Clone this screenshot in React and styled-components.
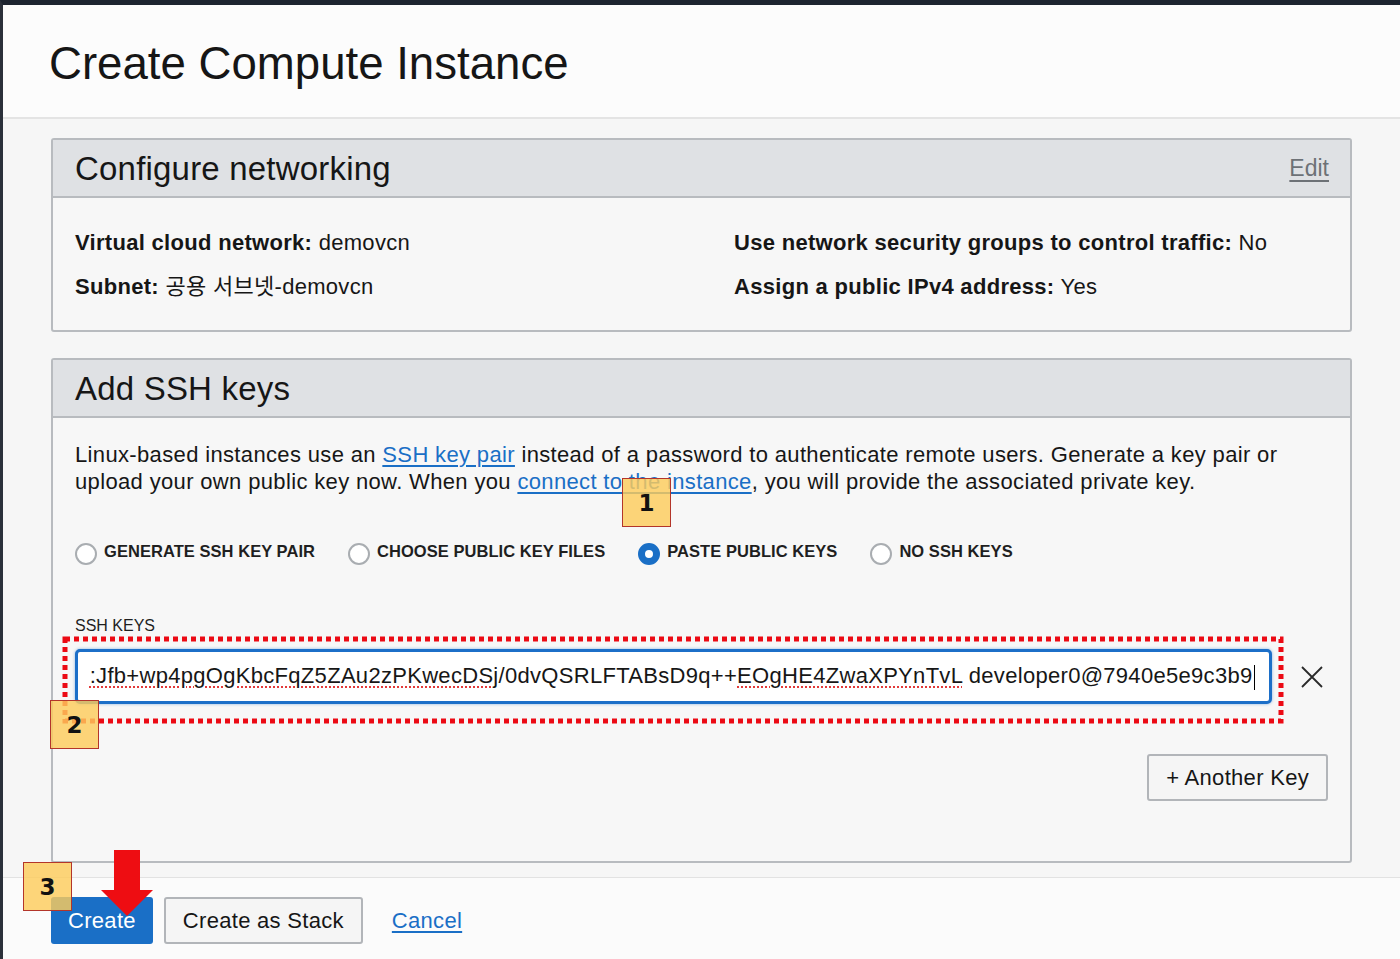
import React from 'react';
import styled, { createGlobalStyle } from 'styled-components';

const GlobalStyle = createGlobalStyle`
  html, body {
    margin: 0;
    padding: 0;
    background: #f6f6f6;
  }
  body {
    font-family: "Liberation Sans", Arial, "Noto Sans CJK KR", sans-serif;
    color: #161616;
  }
`;

const Frame = styled.div`
  position: relative;
  width: 1400px;
  height: 959px;
  box-sizing: border-box;
  border-top: 5px solid #1d2430;
  border-left: 3px solid #2b303a;
  background: #f6f6f6;
  display: flex;
  flex-direction: column;
  overflow: hidden;
`;

const Header = styled.div`
  height: 112px;
  flex: none;
  background: #fcfcfc;
  border-bottom: 2px solid #e4e4e4;
  display: flex;
  align-items: center;
  padding-left: 46px;
`;

const PageTitle = styled.h1`
  margin: 6px 0 0;
  font-size: 45.6px;
  font-weight: 400;
  color: #161616;
`;

const Content = styled.div`
  flex: 1;
  padding: 19px 48px 0 48px;
  display: flex;
  flex-direction: column;
  gap: 26px;
`;

const Panel = styled.section`
  width: 1301px;
  box-sizing: border-box;
  border: 2px solid #b8bbbf;
  border-radius: 3px;
  background: #f7f7f7;
  height: ${(p) => p.$height}px;
  display: flex;
  flex-direction: column;
`;

const PanelHead = styled.div`
  height: 58px;
  flex: none;
  box-sizing: border-box;
  background: #dfe1e4;
  border-bottom: 2px solid #b8bbbf;
  display: flex;
  align-items: center;
  justify-content: space-between;
  padding: 0 21px 0 22px;
`;

const PanelTitle = styled.h2`
  margin: 2px 0 0;
  font-size: 33px;
  font-weight: 400;
  letter-spacing: 0.2px;
  color: #161616;
`;

const EditLink = styled.a`
  font-size: 23px;
  color: #6d7176;
  text-decoration: underline;
  text-underline-offset: 4px;
`;

const NetBody = styled.div`
  display: grid;
  grid-template-columns: 659px 1fr;
  row-gap: 18px;
  padding: 32px 22px 0 22px;
`;

const Field = styled.div`
  font-size: 22px;
  line-height: 26px;
  letter-spacing: 0.3px;
  color: #161616;
  b {
    font-weight: 700;
  }
`;

const SshBody = styled.div`
  padding: 23px 22px 0 22px;
  display: flex;
  flex-direction: column;
`;

const Intro = styled.p`
  margin: 0;
  font-size: 22px;
  line-height: 27px;
  letter-spacing: 0.35px;
  color: #161616;
`;

const TextLink = styled.a`
  color: #1a6fc6;
  text-decoration: underline;
  text-underline-offset: 3px;
`;

const RadioRow = styled.div`
  display: flex;
  align-items: center;
  gap: 33px;
  margin-top: 42px;
`;

const RadioOption = styled.label`
  display: flex;
  align-items: center;
  gap: 7px;
  font-size: 16.5px;
  font-weight: 700;
  color: #1f1f1f;
  letter-spacing: 0.05px;
`;

const RadioDot = styled.span`
  width: 22px;
  height: 22px;
  box-sizing: border-box;
  border-radius: 50%;
  margin-top: 6px;
  border: ${(p) => (p.$on ? '7px solid #1a6fc6' : '2px solid #a9adb1')};
  background: #fff;
  flex: none;
`;

const KeysLabel = styled.div`
  margin-top: 52px;
  font-size: 16px;
  font-weight: 500;
  color: #1f1f1f;
`;

const KeyRow = styled.div`
  display: flex;
  align-items: center;
  margin-top: 14px;
`;

const KeyInput = styled.div`
  width: 1197px;
  height: 55px;
  box-sizing: border-box;
  border: 3px solid #1c6fc8;
  border-radius: 5px;
  background: #fff;
  box-shadow: 0 0 3px rgba(28, 111, 200, 0.5);
  display: flex;
  align-items: center;
  justify-content: flex-end;
  overflow: hidden;
  padding-right: 14px;
  font-size: 22px;
  letter-spacing: 0.3px;
  color: #161616;
  white-space: nowrap;
`;

const Misspelt = styled.span`
  text-decoration: underline dotted #e23a3a;
  text-decoration-thickness: 2px;
  text-underline-offset: 3px;
`;

const Caret = styled.span`
  display: inline-block;
  width: 1.5px;
  height: 25px;
  background: #000;
  vertical-align: middle;
  margin-left: 1px;
`;

const RemoveButton = styled.button`
  border: none;
  background: transparent;
  margin-left: 27px;
  padding: 0;
  width: 26px;
  height: 26px;
  display: flex;
  align-items: center;
  justify-content: center;
`;

const AddRow = styled.div`
  display: flex;
  justify-content: flex-end;
  margin-top: 50px;
`;

const PlainButton = styled.button`
  height: 47px;
  box-sizing: border-box;
  padding: 0 17px;
  border: 2px solid #b2b5b9;
  border-radius: 3px;
  background: #f5f5f5;
  font-family: inherit;
  font-size: 22px;
  letter-spacing: 0.3px;
  color: #161616;
`;

const Footer = styled.div`
  height: 82px;
  flex: none;
  box-sizing: border-box;
  margin-top: 14px;
  border-top: 1px solid #e2e2e2;
  background: #fbfbfb;
  display: flex;
  align-items: flex-start;
  padding: 19px 0 0 48px;
  gap: 11px;
`;

const PrimaryButton = styled.button`
  height: 47px;
  box-sizing: border-box;
  padding: 0 17px;
  border: none;
  border-radius: 3px;
  background: #1a6fc6;
  font-family: inherit;
  font-size: 22px;
  letter-spacing: 0.3px;
  color: #fff;
`;

const CancelLink = styled(TextLink)`
  font-size: 22px;
  letter-spacing: 0.3px;
  line-height: 47px;
  margin-left: 18px;
`;

const Badge = styled.div`
  position: absolute;
  left: ${(p) => p.$x}px;
  top: ${(p) => p.$y}px;
  width: 49px;
  height: 49px;
  box-sizing: border-box;
  border: 1px solid #b3352a;
  background: rgba(253, 204, 92, 0.82);
  display: flex;
  align-items: center;
  justify-content: center;
  font-family: "DejaVu Sans", sans-serif;
  font-size: 23px;
  font-weight: 700;
  color: #111;
`;

const Overlay = styled.svg`
  position: absolute;
  left: ${(p) => p.$x}px;
  top: ${(p) => p.$y}px;
  pointer-events: none;
`;

function App() {
  return (
    <Frame>
      <GlobalStyle />
      <Header>
        <PageTitle>Create Compute Instance</PageTitle>
      </Header>
      <Content>
        <Panel $height={194}>
          <PanelHead>
            <PanelTitle>Configure networking</PanelTitle>
            <EditLink>Edit</EditLink>
          </PanelHead>
          <NetBody>
            <Field><b>Virtual cloud network:</b> demovcn</Field>
            <Field><b>Use network security groups to control traffic:</b> No</Field>
            <Field><b>Subnet:</b> 공용 서브넷-demovcn</Field>
            <Field><b>Assign a public IPv4 address:</b> Yes</Field>
          </NetBody>
        </Panel>

        <Panel $height={505}>
          <PanelHead>
            <PanelTitle>Add SSH keys</PanelTitle>
          </PanelHead>
          <SshBody>
            <Intro>
              Linux-based instances use an <TextLink>SSH key pair</TextLink> instead of a password
              to authenticate remote users. Generate a key pair or upload your own public key now.
              When you <TextLink>connect to the instance</TextLink>, you will provide the associated
              private key.
            </Intro>
            <RadioRow>
              <RadioOption><RadioDot />GENERATE SSH KEY PAIR</RadioOption>
              <RadioOption><RadioDot />CHOOSE PUBLIC KEY FILES</RadioOption>
              <RadioOption><RadioDot $on />PASTE PUBLIC KEYS</RadioOption>
              <RadioOption><RadioDot />NO SSH KEYS</RadioOption>
            </RadioRow>
            <KeysLabel>SSH KEYS</KeysLabel>
            <KeyRow>
              <KeyInput>
                <span>
                  <Misspelt>:Jfb+wp4pgOgKbcFqZ5ZAu2zPKwecDSj</Misspelt>
                  /0dvQSRLFTABsD9q++
                  <Misspelt>EOgHE4ZwaXPYnTvL</Misspelt> developer0@7940e5e9c3b9
                  <Caret />
                </span>
              </KeyInput>
              <RemoveButton aria-label="remove">
                <svg width="24" height="24" viewBox="0 0 24 24">
                  <path d="M2 2 L22 22 M22 2 L2 22" stroke="#2a2a2a" strokeWidth="1.8" fill="none" />
                </svg>
              </RemoveButton>
            </KeyRow>
            <AddRow>
              <PlainButton>+ Another Key</PlainButton>
            </AddRow>
          </SshBody>
        </Panel>
      </Content>
      <Footer>
        <PrimaryButton>Create</PrimaryButton>
        <PlainButton>Create as Stack</PlainButton>
        <CancelLink>Cancel</CancelLink>
      </Footer>

      <Overlay $x={59} $y={627} width="1226" height="95" viewBox="0 0 1226 95">
        <rect
          x="3"
          y="7"
          width="1216"
          height="82"
          fill="none"
          stroke="#ec0a14"
          strokeWidth="5"
          strokeDasharray="5 4"
        />
      </Overlay>
      <Overlay $x={95} $y={843} width="58" height="70" viewBox="0 0 58 70">
        <polygon points="16,2 42,2 42,42 55,42 29,68 3,42 16,42" fill="#ee0d12" />
      </Overlay>
      <Badge $x={619} $y={473}>1</Badge>
      <Badge $x={47} $y={695}>2</Badge>
      <Badge $x={20} $y={857}>3</Badge>
    </Frame>
  );
}

export default App;
